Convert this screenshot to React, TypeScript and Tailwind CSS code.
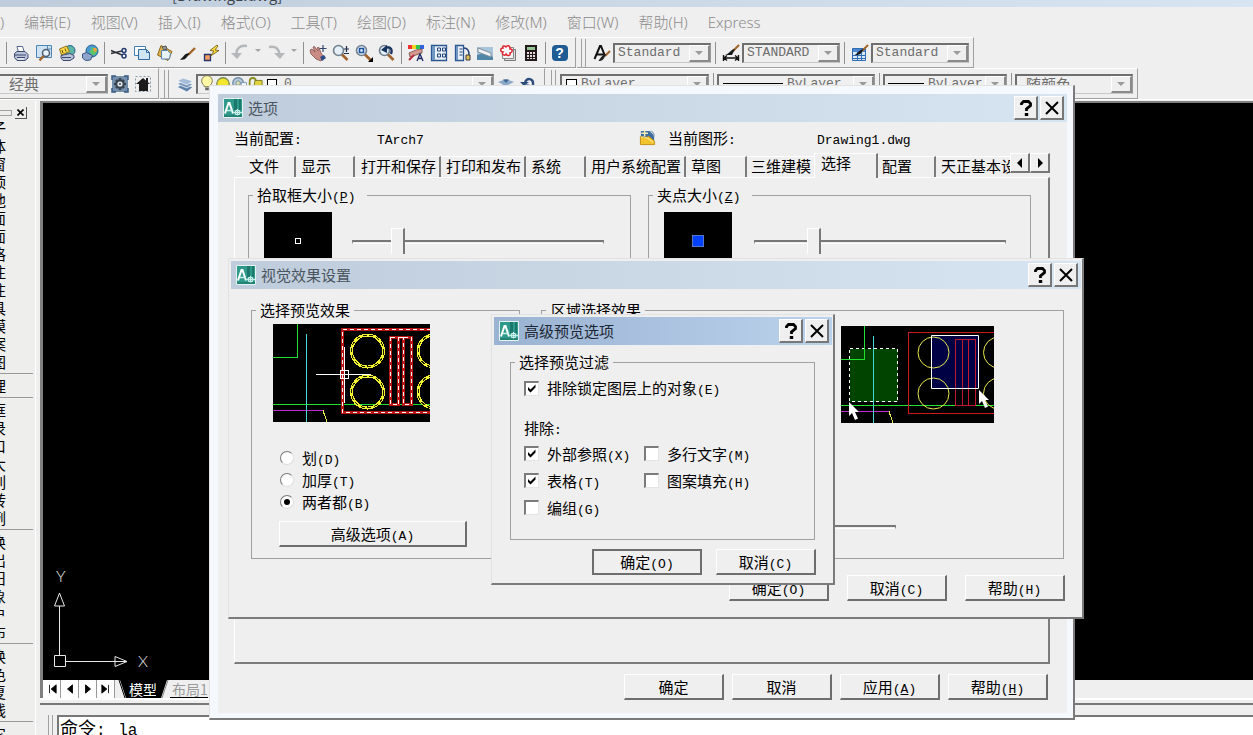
import React, { type ReactNode } from 'react';

/* ---------- text ---------- */

function Mixed({ text, hotkey }: { text: string; hotkey?: string }) {
  const parts = text.split(/([\x20-\x7e]+)/).filter(Boolean);
  return (
    <>
      {parts.map((part, i) =>
        /^[\x20-\x7e]/.test(part) ? (
          <span key={i} className="font-['Liberation_Mono',monospace] text-[13px] leading-none">
            {hotkey && part === `(${hotkey})` ? (
              <>
                (<u>{hotkey}</u>)
              </>
            ) : (
              part
            )}
          </span>
        ) : (
          <span key={i}>{part}</span>
        ),
      )}
    </>
  );
}

/* ---------- icons ---------- */

function Svg({ children, className = 'h-[18px] w-[18px]' }: { children: ReactNode; className?: string }) {
  return (
    <svg viewBox="0 0 18 18" className={className} fill="none" aria-hidden="true">
      {children}
    </svg>
  );
}

const Printer = () => (
  <Svg>
    <path d="M5 2.500h5.500l2 6H6.500z" fill="#fff" stroke="#54648c" />
    <path d="M2.500 9.500 5 7.500h8l3 3v3.500l-3 2.500H5l-2.500-3z" fill="#b8c2d8" stroke="#3e4a70" />
    <path d="M3 11h11M5 13.500h8" stroke="#3e4a70" />
    <path d="M6 15h6" stroke="#fff" />
  </Svg>
);
const Preview = () => (
  <Svg>
    <path d="M1.500 1.500h15v12h-15z" fill="#cfe2f3" stroke="#4f86b8" />
    <path d="M12.500 1.500v3.500h4" stroke="#4f86b8" />
    <circle cx="11" cy="9" r="3.500" fill="#e8f4fd" stroke="#4d5c6b" strokeWidth="1.500" />
    <path d="m8.500 12-4 4.500" stroke="#a5672c" strokeWidth="2.500" />
  </Svg>
);
const Plot = () => (
  <Svg>
    <circle cx="12" cy="6.500" r="5" fill="#5db5a5" stroke="#24608d" />
    <path d="m1.500 5 7-3 3 5.500-8 3.500z" fill="#ffd94a" stroke="#927011" />
    <path d="m4 6 1 3m2-4.500 1 3" stroke="#5a4a10" />
    <path d="m3 11.500 9-2 4 2v2.500l-4 2.500H5L3 14z" fill="#b8c2d8" stroke="#3e4a70" />
    <path d="M4 13.500h9" stroke="#3e4a70" />
  </Svg>
);
const Publish = () => (
  <Svg>
    <circle cx="11" cy="7" r="6" fill="#4a9bd2" stroke="#24608d" />
    <path d="M8 2.500c4 0 3 4 0 5l3 4c4 0 6-4 5-7z" fill="#5cc46b" />
    <path d="M12 4h3l1 3-3 1z" fill="#f0a23c" />
    <path d="m1.500 10 4-1.500 6 3-2 4.500-5 .5-3-2.500z" fill="#8fa6cc" stroke="#3f5585" />
  </Svg>
);
const Cut = () => (
  <Svg>
    <path d="M1 6.500 12 11M1 9.500l11-2.500" stroke="#30343c" strokeWidth="1.400" />
    <circle cx="14" cy="6.500" r="2" stroke="#253b70" strokeWidth="1.500" />
    <circle cx="14" cy="12" r="2" stroke="#253b70" strokeWidth="1.500" />
  </Svg>
);
const Copy = () => (
  <Svg>
    <path d="M1.500 2.500h11v9h-11z" fill="#fff" stroke="#3f80b5" />
    <path d="M5.500 5.500h8l3 3v7h-11z" fill="#cfe4f4" stroke="#2e6ca3" />
    <path d="M13.500 5.500v3h3" stroke="#2e6ca3" />
  </Svg>
);
const Paste = () => (
  <Svg>
    <path d="m5 1.500 11 6-4 9L1.500 11z" fill="#e0b24b" stroke="#8e671c" />
    <path d="m6 3 4-1 1 3-3 1z" fill="#999" stroke="#555" />
    <path d="M5.500 6.500h6l3 3-1 5.500h-8z" fill="#eaf3fb" stroke="#5482ad" />
  </Svg>
);
const Brush = () => (
  <Svg>
    <path d="M16 4 9 11" stroke="#a3662a" strokeWidth="2.400" />
    <path d="M10.500 9.500 8 13c-2 3-5 3-7 2.500 2-1 3-3 4.500-4.500 1.500-1 3-2 5-1.500z" fill="#16181c" />
  </Svg>
);
const Match = () => (
  <Svg>
    <path d="M2.500 10.500h6v6h-6z" fill="#f59b62" stroke="#25346c" strokeWidth="1.300" />
    <path d="m15 1-7 5.500 4 .500L8.500 12 17 6.500l-4-.500 3-4z" fill="#ffe43d" stroke="#6b4b0d" strokeWidth=".8" />
  </Svg>
);
const Undo = () => (
  <Svg>
    <path d="M16 2C9 .5 5 5 5.500 11" stroke="#b5b8bb" strokeWidth="2.500" />
    <path d="M0 9h11l-5 6z" fill="#b5b8bb" />
  </Svg>
);
const Redo = () => (
  <Svg>
    <path d="M2 3c7-1.500 10 2 10.500 8" stroke="#b5b8bb" strokeWidth="2.500" />
    <path d="M7 9h11l-5 6z" fill="#b5b8bb" />
  </Svg>
);
const Pan = () => (
  <Svg>
    <path d="m1 6 2-1 3 3-2-5 1.500-.5L9 7 8.500 3.500H10L12 9l3 4-3 4-5-2-5-5z" fill="#c98b86" stroke="#88504e" strokeWidth=".8" />
    <path d="m11 13 4-2 2 3-4 3z" fill="#2f4b86" />
    <path d="M14 1v7M10.500 4.500h7" stroke="#35466b" strokeWidth="1.200" />
  </Svg>
);
const ZoomLens = ({ children }: { children?: ReactNode }) => (
  <Svg>
    <path d="m9.500 10 6 6" stroke="#a3622b" strokeWidth="2.600" />
    <circle cx="6.500" cy="6.500" r="5" fill="#e4eff8" stroke="#71808f" strokeWidth="1.600" />
    {children}
  </Svg>
);
const Palette = () => (
  <Svg>
    <path d="M1 1h4v4H1z" fill="#e33" />
    <path d="M5 1h4v4H5z" fill="#f0d020" />
    <path d="M9 1h4v4H9z" fill="#2bc64a" />
    <path d="M13 1h4v4h-4z" fill="#3160e0" />
    <path d="m2 9 7-3 6-1v4l-6 2-6 2z" fill="#d49a90" stroke="#794643" strokeWidth=".8" />
    <path d="m2 16 5-5" stroke="#b52f3f" strokeWidth="2" />
    <path d="m10 17 3-7 3 7m-5-2.500h4" stroke="#1d2a66" strokeWidth="1.300" />
  </Svg>
);
const ToolPalette = () => (
  <Svg>
    <path d="M1.500 1.500h15v15h-15z" fill="#e9f0f8" stroke="#2d5790" strokeWidth="1.300" />
    <path d="M2 2h3v14H2z" fill="#6f97c4" />
    <path d="M7.500 4h3v3h-3zm5 0h3v3h-3zm-5 6h3v3h-3zm5 0h3v3h-3z" stroke="#23427a" />
  </Svg>
);
const SheetSet = () => (
  <Svg>
    <path d="M2.500 1.500h8v15h-8z" fill="#e9f0f8" stroke="#2d5790" strokeWidth="1.300" />
    <path d="M3 2h2v14H3z" fill="#6f97c4" />
    <path d="M6.500 5h3M6.500 8h3M6.500 11h3" stroke="#23427a" />
    <path d="M11 4c4 0 5 3 5 7" stroke="#23427a" strokeWidth="1.500" />
    <path d="M13 11h4v5h-4z" fill="#e3bf58" stroke="#3a3a3a" />
  </Svg>
);
const Render = () => (
  <Svg>
    <path d="M1 3h16v13H1z" fill="#a8c5dc" />
    <path d="M1 11 8 9l9 4v3H1z" fill="#4f86a8" />
    <path d="m2 4 13 5v4L2 8z" fill="#eef2f5" stroke="#7f8d99" />
  </Svg>
);
const Markup = () => (
  <Svg>
    <path d="M5.500 5.500h11v11h-11z" fill="#ddd" stroke="#777" />
    <path d="M3.500 3.500h11v11h-11z" fill="#f4f4f4" stroke="#888" />
    <path d="M4 4c-3 0-3 4 0 4-2 3 2 4 3 2 2 3 5 1 4-1 3-1 3-4 0-4 0-4-3-4-4-2-2-2-4-1-3 1z" fill="#fff" stroke="#df2630" strokeWidth="1.500" />
  </Svg>
);
const Calculator = () => (
  <Svg>
    <path d="M3 1h12v16H3z" fill="#221a1a" />
    <path d="M5 3h8v3H5z" fill="#92c592" />
    <path d="M5 8h2v2H5zm3 0h2v2H8zm3 0h2v2h-2zm-6 3h2v2H5zm3 0h2v2H8zm3 0h2v2h-2zm-6 3h2v1H5zm3 0h2v1H8zm3 0h2v1h-2z" fill="#e9dcdc" />
  </Svg>
);
const TextStyle = () => (
  <Svg>
    <path d="M1.500 15 7 2h1l4 10M4 10.500h7" stroke="#111" strokeWidth="2" />
    <path d="m17 7-5 5" stroke="#a3662a" strokeWidth="2" />
    <path d="m13.500 10-3 5c-2 2-3 2-5 2 2-3 4-7 8-7z" fill="#222" />
  </Svg>
);
const DimStyle = () => (
  <Svg>
    <path d="m17 1-6 6" stroke="#a3662a" strokeWidth="2.200" />
    <path d="m13 5-3 6H3c4-1 6-6 10-6z" fill="#16181c" />
    <path d="M1.500 11v6m15-6v6M2 14h14M5 11.500 2 14l3 2.500m8-5 3 2.500-3 2.500" stroke="#111" strokeWidth="1.400" />
  </Svg>
);
const TableStyle = () => (
  <Svg>
    <path d="M1.500 4.500h13v12h-13z" fill="#dbe9f7" stroke="#2f6cb4" />
    <path d="M2 5h12v3H2z" fill="#4e8bd0" />
    <path d="M2 11.500h12m-12 3h12M6.500 8v8m4-8v8" stroke="#2f6cb4" />
    <path d="m17 1-6 6" stroke="#a3662a" strokeWidth="2" />
    <path d="m12.500 5-3 5c-2 1-4 1-6 1 3-1 4-5 9-6z" fill="#16181c" />
  </Svg>
);
const Gear = () => (
  <Svg>
    <path d="M1 1h16v16H1z" fill="#7590ad" />
    <path d="M1 5V1h4m8 0h4v4m0 8v4h-4m-8 0H1v-4" stroke="#34597d" strokeWidth="1.500" />
    <path d="M9 3v12M3 9h12M5 5l8 8M13 5l-8 8" stroke="#3a444f" strokeWidth="2.600" />
    <circle cx="9" cy="9" r="4.500" fill="#3a444f" />
    <circle cx="9" cy="9" r="2.600" fill="#e6ecf2" />
    <circle cx="9" cy="9" r="1" fill="#3a444f" />
  </Svg>
);
const House = () => (
  <Svg>
    <path d="M1.500 1.500h15v15h-15z" stroke="#8a97a5" strokeDasharray="2 2" />
    <path d="m9 3 7 6h-2v7H5V9H2z" fill="#1b1b1b" />
    <path d="M12 3h2v4h-2z" fill="#1b1b1b" />
  </Svg>
);
const Layers = () => (
  <Svg>
    <path d="m1 12 6-3 10 3-6 5z" fill="#5c81ab" stroke="#fff" strokeWidth=".7" />
    <path d="m1 9 6-3 10 3-6 4z" fill="#7897bb" stroke="#fff" strokeWidth=".7" />
    <path d="m1 6 6-3 10 3-6 4z" fill="#a5bdd8" stroke="#fff" strokeWidth=".7" />
  </Svg>
);
const LayerStack = () => (
  <Svg>
    <path d="m1 12 6-3 10 3-6 5z" fill="#5c81ab" />
    <path d="m1 7 8-3 8 3-8 4z" fill="#8da9c8" />
    <path d="M6 4.500h6L9 8z" fill="#3f6592" />
  </Svg>
);
const LayerPrev = () => (
  <Svg>
    <path d="m1 12 6-3 10 3-6 3z" fill="#5c81ab" />
    <path d="M5 8c1-6 9-5 8 2" stroke="#2c4e7c" strokeWidth="2.500" />
    <path d="M0 7h9l-5 4z" fill="#2c4e7c" />
  </Svg>
);
const Bulb = () => (
  <Svg className="h-4 w-4">
    <path d="M6 12c0-2-3-3-3-6.500a6 6 0 0 1 12 0C15 9 12 10 12 12z" fill="#fff9a8" stroke="#777044" />
    <path d="M7 13h4v3H7z" fill="#666" />
  </Svg>
);
const Sun = () => (
  <Svg className="h-4 w-4">
    <circle cx="9" cy="9" r="7" fill="#f4e62c" stroke="#7c8c50" strokeWidth="1.500" />
  </Svg>
);
const Freeze = () => (
  <Svg className="h-4 w-4">
    <circle cx="8" cy="8" r="6" fill="#b8cada" stroke="#6f8ba5" strokeWidth="1.500" />
    <circle cx="8" cy="8" r="2.500" fill="#e3e3a2" stroke="#6f8ba5" />
    <path d="M11.500 7.500h6v8h-6z" fill="#fff" stroke="#6f8ba5" />
  </Svg>
);
const Lock = () => (
  <Svg className="h-4 w-4">
    <path d="M3 10V6c0-5 7-5 7 0v2" stroke="#8a8d20" strokeWidth="2" />
    <path d="M9 5h8v11H7z" fill="#dfd23c" stroke="#77761c" />
  </Svg>
);
const DwgIcon = () => (
  <Svg className="h-[17px] w-[17px]">
    <path d="M2 2h9l5 5v9H2z" fill="#3e6c9e" />
    <path d="M1.500 16.500V8l5 1 4-1 6 5v3.500z" fill="#f2c52f" stroke="#c58d14" />
    <path d="M2 9c3-2 8 1 13 5" stroke="#fff3b0" />
    <path d="M6 1v7M2.500 4.500h7" stroke="#f5eeb4" strokeWidth="1.500" />
    <path d="M12 2c3 1 4 3 4 6" stroke="#8fa9c0" strokeWidth="1.500" />
  </Svg>
);

function AppIcon() {
  return (
    <svg viewBox="0 0 20 20" className="h-5 w-5 shrink-0" fill="none" aria-hidden="true">
      <path d="M.5.5h19v19H.5z" fill="#2e9a8b" stroke="#e4f2f0" />
      <path d="M11 1h3v11h-3zm5 0h2v11h-2z" fill="#1c776c" />
      <path d="M2 15.500 5.500 5h1L10 15.500" stroke="#fff" strokeWidth="2" />
      <path d="M4 12.500h6M11 14.500h8M14.500 11v7" stroke="#c9efe9" strokeWidth="1.300" />
      <path d="M12.500 12.500h4v4h-4z" stroke="#c9efe9" />
      <path d="M1 18h18" stroke="#176c61" />
    </svg>
  );
}

/* ---------- toolbar parts ---------- */

function Tool({ label, children }: { label: string; children: ReactNode }) {
  return (
    <button type="button" aria-label={label} className="flex h-6 w-[23px] shrink-0 items-center justify-center">
      {children}
    </button>
  );
}
const Sep = () => (
  <span className="flex h-[22px] w-[6px] shrink-0 justify-center">
    <span className="w-px bg-[#909090]" />
  </span>
);
const WideSep = () => (
  <span className="flex h-[22px] w-2 shrink-0 justify-center">
    <span className="w-px bg-[#909090]" />
  </span>
);
const Caret = () => (
  <span className="flex w-[13px] shrink-0 justify-center pb-1">
    <svg viewBox="0 0 6 3" className="h-[3px] w-[6px]" aria-hidden="true">
      <path d="M0 0h6L3 3z" fill="#a4a4a4" />
    </svg>
  </span>
);
const Grip = () => (
  <span className="mr-1 ml-1 flex h-7 shrink-0 gap-[3px]">
    <span className="w-px bg-[#a0a0a0]" />
    <span className="w-px bg-[#a0a0a0]" />
  </span>
);
function Bar({ children }: { children: ReactNode }) {
  return (
    <div className="mr-px flex h-full shrink-0 items-center border-t border-r border-b border-t-white border-r-[#a0a0a0] border-b-[#a0a0a0] pr-1">
      {children}
    </div>
  );
}
function Combo({ label, value, width, lead }: { label: string; value: string; width: string; lead?: ReactNode }) {
  const font = /^[\x20-\x7e]/.test(value) ? "font-['Liberation_Mono',monospace] text-[13px]" : 'text-[15px]';
  return (
    <span
      className={`relative flex h-5 shrink-0 items-center overflow-hidden border-2 border-r border-b border-[#6f6f6f] border-r-[#9a9a9a] border-b-[#c8c8c8] text-[#6d6d6d] ${width}`}
    >
      {lead}
      <select
        aria-label={label}
        className={`h-full min-w-0 flex-1 appearance-none bg-transparent pl-[3px] leading-4 outline-none ${font}`}
      >
        <option>{value}</option>
      </select>
      <span className="pointer-events-none flex h-full w-[21px] shrink-0 items-center justify-center border-t border-r-2 border-b-2 border-l border-t-white border-r-[#8a8a8a] border-b-[#8a8a8a] border-l-white bg-[#efefef]">
        <svg viewBox="0 0 8 4" className="h-1 w-2" aria-hidden="true">
          <path d="M0 0h8L4 4z" fill="#9a9a9a" />
        </svg>
      </span>
    </span>
  );
}

/* ---------- dialog parts ---------- */

function PushButton({ text, hotkey, size = 'w-[100px]', primary }: { text: string; hotkey?: string; size?: string; primary?: boolean }) {
  return (
    <button
      type="button"
      className={`flex h-[26px] shrink-0 items-center justify-center whitespace-pre border-r-2 border-b-2 border-[#6e6e6e] bg-[#efefef] text-[15px] leading-5 ${
        primary ? 'border-t-2 border-l-2' : 'border-t border-l border-t-white border-l-white'
      } ${size}`}
    >
      <span>
        <Mixed text={text} hotkey={hotkey} />
      </span>
    </button>
  );
}

function Caption({ title, active }: { title: string; active?: boolean }) {
  return (
    <header
      className={`flex h-7 shrink-0 items-center pr-[3px] pl-[5px] ${
        active
          ? 'bg-linear-to-r from-[#9ab3d2] to-[#bbd2ec] text-[#1d2733]'
          : 'bg-linear-to-r from-[#bfccdb] to-[#d7e4f1] text-[#4b5560]'
      }`}
    >
      <AppIcon />
      <h2 className="flex-1 pl-[5px] text-[15px] leading-5">{title}</h2>
      <div className="flex gap-[2px]">
        <button
          type="button"
          aria-label="帮助"
          className="flex h-6 w-6 items-center justify-center border-t border-r-2 border-b-2 border-l border-t-white border-r-[#777] border-b-[#777] border-l-white bg-[#efefef] text-black"
        >
          <svg viewBox="0 0 14 16" className="h-4 w-[14px]" fill="none" aria-hidden="true">
            <path d="M2.500 5V3.500l2-2h5l2 2v2l-4 3.500v2" stroke="#000" strokeWidth="2.800" />
            <path d="M5.800 13h3.400v3H5.800z" fill="#000" />
          </svg>
        </button>
        <button
          type="button"
          aria-label="关闭"
          className="flex h-6 w-6 items-center justify-center border-t border-r-2 border-b-2 border-l border-t-white border-r-[#777] border-b-[#777] border-l-white bg-[#efefef]"
        >
          <svg viewBox="0 0 14 14" className="h-[14px] w-[14px]" fill="none" aria-hidden="true">
            <path d="m1 1 12 12M13 1 1 13" stroke="#000" strokeWidth="2" />
          </svg>
        </button>
      </div>
    </header>
  );
}

function Frame({ children, className }: { children: ReactNode; className: string }) {
  return (
    <section
      role="dialog"
      className={`absolute flex flex-col border-t border-r-2 border-b-2 border-l border-t-[#e2e2e2] border-r-[#7b7b7b] border-b-[#7b7b7b] border-l-[#e2e2e2] ${className}`}
    >
      {children}
    </section>
  );
}

function Group({ title, hotkey, children, className, legend = 'px-1' }: { title: string; hotkey?: string; children: ReactNode; className: string; legend?: string }) {
  return (
    <fieldset className={`border border-[#a0a0a0] ${className}`}>
      <legend className={`ml-1 h-5 text-[15px] leading-5 ${legend}`}>
        <Mixed text={title} hotkey={hotkey} />
      </legend>
      {children}
    </fieldset>
  );
}

function Slider({ label, value, width = 'w-[252px]' }: { label: string; value: number; width?: string }) {
  return (
    <input
      type="range"
      aria-label={label}
      defaultValue={value}
      className={`block h-7 appearance-none bg-transparent [&::-webkit-slider-runnable-track]:h-1 [&::-webkit-slider-runnable-track]:border [&::-webkit-slider-runnable-track]:border-t-2 [&::-webkit-slider-runnable-track]:border-[#8b8b8b] [&::-webkit-slider-runnable-track]:border-t-[#777] [&::-webkit-slider-runnable-track]:border-b-white [&::-webkit-slider-thumb]:-mt-[14px] [&::-webkit-slider-thumb]:h-[26px] [&::-webkit-slider-thumb]:w-[14px] [&::-webkit-slider-thumb]:appearance-none [&::-webkit-slider-thumb]:border-t [&::-webkit-slider-thumb]:border-r-2 [&::-webkit-slider-thumb]:border-l [&::-webkit-slider-thumb]:border-white [&::-webkit-slider-thumb]:border-r-[#777] [&::-webkit-slider-thumb]:bg-[#efefef] ${width}`}
    />
  );
}

function Check({ text, checked }: { text: string; checked?: boolean }) {
  return (
    <label className="flex items-center gap-2 text-[15px] leading-5 whitespace-nowrap">
      <span className="relative h-[15px] w-[15px] shrink-0">
        <input
          type="checkbox"
          defaultChecked={checked}
          className="peer block h-[15px] w-[15px] appearance-none border-t-2 border-r border-b border-l-2 border-t-[#7b7b7b] border-r-[#e4e4e4] border-b-[#e4e4e4] border-l-[#7b7b7b] bg-white"
        />
        <svg viewBox="0 0 15 15" className="pointer-events-none absolute inset-0 hidden h-[15px] w-[15px] peer-checked:block" fill="none" aria-hidden="true">
          <path d="M4 6v3l2.500 2.500 5-5v-3l-5 5z" fill="#000" />
        </svg>
      </span>
      <span>
        <Mixed text={text} />
      </span>
    </label>
  );
}

function Radio({ text, checked }: { text: string; checked?: boolean }) {
  return (
    <label className="flex h-[22px] items-center gap-2 text-[15px] leading-5">
      <span className="relative h-[14px] w-[14px]">
        <input
          type="radio"
          name="preview-effect"
          defaultChecked={checked}
          className="peer block h-[14px] w-[14px] appearance-none rounded-full border border-t-[#7b7b7b] border-r-[#dedede] border-b-[#dedede] border-l-[#7b7b7b] bg-white"
        />
        <span className="pointer-events-none absolute top-1 left-1 hidden h-[6px] w-[6px] rounded-full bg-black peer-checked:block" />
      </span>
      <span>
        <Mixed text={text} />
      </span>
    </label>
  );
}

/* ---------- drawings ---------- */

function SelectionPreview() {
  const rings = [
    [94.5, 27],
    [94.5, 68],
    [161, 27],
    [161, 68],
  ];
  const frame = 'M158 5.500H69.500V88.500H158';
  const bars = 'M117.500 13.500h8v67h-8zM130.500 13.500h7.500v67h-7.500zM125.500 13.500h5';
  return (
    <svg viewBox="0 0 157 98" className="h-[98px] w-[157px] bg-black" fill="none" shapeRendering="crispEdges" aria-hidden="true">
      <path d="M0 33.500h24.500V0" stroke="#20e030" />
      <path d="M0 80.500h157" stroke="#20e030" />
      <path d="M0 86.500h50" stroke="#c02ad0" />
      <path d="m50 86.500 4 11.500" stroke="#e8e850" />
      <path d="M33.500 10v88" stroke="#45d6d6" />
      <path d={frame} stroke="#b81414" strokeWidth="3" />
      <path d={frame} stroke="#fff" strokeDasharray="4 3" />
      <path d={bars} stroke="#b81414" strokeWidth="3" />
      <path d={bars} stroke="#fff" strokeDasharray="4 3" />
      {rings.map(([cx, cy]) => (
        <g key={`${cx}-${cy}`}>
          <circle cx={cx} cy={cy} r="16" stroke="#f2f232" strokeWidth="3" />
          <circle cx={cx} cy={cy} r="16" stroke="#1a1a05" strokeDasharray="4 3" />
        </g>
      ))}
      <path d="M43 50.500h55M71.500 23v56M67.500 46.500h8v8h-8z" stroke="#fff" />
    </svg>
  );
}

function AreaPreview() {
  const arrow = 'v14l3-3 3 7 3-1.500-3-6.500h4z';
  return (
    <svg viewBox="0 0 153 97" className="h-[97px] w-[153px] bg-black" fill="none" aria-hidden="true">
      <g shapeRendering="crispEdges">
        <path d="M8.500 22.500h48v53h-48z" fill="#004400" stroke="#fff" strokeDasharray="3 3" />
        <path d="M90.500 9.500h47v53h-47z" fill="#000044" />
        <path d="M0 33.500h23.500V0M0 79.500h153" stroke="#20e030" />
        <path d="M0 85.500h48" stroke="#c02ad0" />
        <path d="m48 85.500 4 11.500" stroke="#e8e850" />
        <path d="M32.500 10v87" stroke="#45d6d6" />
        <path d="M153 6.500H67.500v81H153" stroke="#d01818" />
        <path d="M114.500 13.500v66h20v-66zM121.500 13.500v66M127.500 13.500v66" stroke="#c01830" />
      </g>
      <circle cx="92.500" cy="26.500" r="15.500" stroke="#e8e850" />
      <circle cx="92.500" cy="67.500" r="15.500" stroke="#e8e850" />
      <circle cx="158" cy="26.500" r="15.500" stroke="#e8e850" />
      <circle cx="158" cy="67.500" r="15.500" stroke="#e8e850" />
      <path d="M90.500 9.500h47v53h-47z" stroke="#fff" />
      <path d={`M8 76${arrow}`} fill="#fff" />
      <path d={`M138 64${arrow}`} fill="#fff" />
    </svg>
  );
}

function UcsIcon() {
  return (
    <svg viewBox="0 0 110 110" className="h-[110px] w-[110px] font-['Lato',sans-serif] font-light" fill="none" stroke="#e8e8e8" aria-hidden="true">
      <path d="M11.500 85.500h11v11h-11zM16.500 85V36M23 91.500h50" />
      <path d="m16.500 23 5 13h-10zM84 91.500l-12-5v10zM84 91.500H72" />
      <text x="13" y="12" fontSize="16" fill="#e8e8e8" stroke="none">Y</text>
      <text x="95" y="97" fontSize="16" fill="#e8e8e8" stroke="none">X</text>
    </svg>
  );
}

/* ---------- main window ---------- */

const menus = ['编辑(E)', '视图(V)', '插入(I)', '格式(O)', '工具(T)', '绘图(D)', '标注(N)', '修改(M)', '窗口(W)', '帮助(H)', 'Express'];
const palette = ['子体窗顶他面面格注注具模案图', '理', '框录口大列转例', '换出旧象户布', '换色复线', '它'];

function StandardToolbars() {
  return (
    <div className="flex h-[31px] shrink-0">
      <Bar>
        <span className="w-[3px]" />
        <Sep />
        <Tool label="打印"><Printer /></Tool>
        <Tool label="打印预览"><Preview /></Tool>
        <Tool label="发布"><Plot /></Tool>
        <Tool label="网上发布"><Publish /></Tool>
        <Sep />
        <Tool label="剪切"><Cut /></Tool>
        <Tool label="复制"><Copy /></Tool>
        <Tool label="粘贴"><Paste /></Tool>
        <Tool label="特性匹配"><Brush /></Tool>
        <Tool label="块编辑器"><Match /></Tool>
        <Sep />
        <Tool label="放弃"><Undo /></Tool>
        <Caret />
        <Tool label="重做"><Redo /></Tool>
        <Caret />
        <Sep />
        <Tool label="平移"><Pan /></Tool>
        <Tool label="缩放">
          <ZoomLens><path d="M14.500 2v6M12 5h5M12 9.500h5" stroke="#1d2a4a" strokeWidth="1.200" /></ZoomLens>
        </Tool>
        <Tool label="窗口缩放">
          <ZoomLens>
            <path d="M4.500 4.500h4v4h-4z" stroke="#1f55a0" strokeWidth="1.600" />
            <path d="M18 13v5h-5z" fill="#000" />
          </ZoomLens>
        </Tool>
        <Tool label="上一个缩放">
          <ZoomLens>
            <path d="M13 10c2-5-1-8-5-6" stroke="#17325c" strokeWidth="2.200" />
            <path d="m3 6 6-5v8z" fill="#17325c" />
          </ZoomLens>
        </Tool>
        <Sep />
        <Tool label="特性"><Palette /></Tool>
        <Tool label="设计中心"><ToolPalette /></Tool>
        <Tool label="图纸集"><SheetSet /></Tool>
        <Tool label="渲染"><Render /></Tool>
        <Tool label="标记集"><Markup /></Tool>
        <Tool label="计算器"><Calculator /></Tool>
        <Sep />
        <Tool label="帮助">
          <span className="flex h-4 w-4 items-center justify-center rounded-sm bg-[#1f5c94] font-['Liberation_Sans',sans-serif] text-sm font-bold text-white">?</span>
        </Tool>
      </Bar>
      <Bar>
        <Grip />
        <Tool label="文字样式"><TextStyle /></Tool>
        <Combo label="文字样式" value="Standard" width="w-[98px]" />
        <WideSep />
        <Tool label="标注样式"><DimStyle /></Tool>
        <Combo label="标注样式" value="STANDARD" width="w-[98px]" />
        <WideSep />
        <Tool label="表格样式"><TableStyle /></Tool>
        <Combo label="表格样式" value="Standard" width="w-[98px]" />
      </Bar>
    </div>
  );
}

function PropertyToolbars() {
  return (
    <div className="flex h-[31px] shrink-0">
      <Bar>
        <Combo label="工作空间" value="经典" width="w-[108px] border-l-0 pl-[6px]" />
        <Tool label="工作空间设置"><Gear /></Tool>
        <Tool label="我的工作空间"><House /></Tool>
      </Bar>
      <Bar>
        <Grip />
        <Tool label="图层特性"><Layers /></Tool>
        <Combo
          label="图层"
          value="0"
          width="w-[298px]"
          lead={
            <span className="flex shrink-0 items-center pl-px">
              <Bulb />
              <Sun />
              <Freeze />
              <Lock />
              <span className="mx-1 h-[10px] w-[10px] border border-black bg-white" />
            </span>
          }
        />
        <Tool label="当前图层"><LayerStack /></Tool>
        <Tool label="上一个图层"><LayerPrev /></Tool>
      </Bar>
      <Bar>
        <span className="w-px" />
        <Grip />
        <Combo label="颜色" value="ByLayer" width="w-[149px]" lead={<span className="mr-px ml-1 h-[11px] w-[11px] shrink-0 border border-black bg-white" />} />
        <WideSep />
        <Combo label="线型" value="ByLayer" width="w-[158px]" lead={<span className="mr-px mb-[2px] ml-1 h-px w-[60px] shrink-0 bg-black" />} />
        <WideSep />
        <Combo label="线宽" value="ByLayer" width="w-[124px]" lead={<span className="mr-px mb-[2px] ml-[3px] h-px w-9 shrink-0 bg-black" />} />
        <WideSep />
        <Combo label="打印样式" value="随颜色" width="w-[118px] pl-[6px]" />
      </Bar>
    </div>
  );
}

function SidePalette() {
  return (
    <aside className="flex w-9 shrink-0 flex-col overflow-hidden border-r border-white bg-[#eeeeed] pt-[6px]">
      <div className="flex h-3 shrink-0 items-center gap-[3px]">
        <span className="h-[6px] w-3 border-y border-r border-[#a0a0a0]" />
        <button type="button" aria-label="关闭工具栏" className="flex h-3 w-3 items-center justify-center border-r border-b border-[#555]">
          <svg viewBox="0 0 7 7" className="h-[7px] w-[7px]" aria-hidden="true">
            <path d="m.5.5 6 6m0-6-6 6" stroke="#000" strokeWidth="1.600" />
          </svg>
        </button>
      </div>
      {palette.map((group, g) => (
        <ul key={g} className={`mr-[2px] shrink-0 pb-[2px] ${g > 0 ? 'border-t border-[#999] pt-[3px]' : ''}`}>
          {[...group].map((ch, i) => (
            <li key={i} className="flex h-[18px] w-[6px] justify-end overflow-hidden text-[15px] leading-[18px]">
              {ch}
            </li>
          ))}
        </ul>
      ))}
    </aside>
  );
}

function LayoutTabs() {
  const arrows = ['M3 1v10M11 1 5 6l6 5z', 'M9 1 3 6l6 5z', 'M3 1l6 5-6 5z', 'M9 1v10M1 1l6 5-6 5z'];
  return (
    <div className="flex h-[18px] shrink-0 overflow-hidden bg-[#efefef] text-sm leading-[18px]">
      {arrows.map((d) => (
        <button key={d} type="button" aria-label="滚动布局" className="flex w-[18px] items-center justify-center border-r border-[#999] bg-white">
          <svg viewBox="0 0 12 12" className="h-[10px] w-[10px]" aria-hidden="true">
            <path d={d} fill="#000" stroke="#000" />
          </svg>
        </button>
      ))}
      <svg viewBox="0 0 12 18" className="ml-[3px] h-[18px] w-3" aria-hidden="true">
        <path d="M2 0h10v18H8z" fill="#000" />
        <path d="m1 0 6 18" stroke="#000" />
      </svg>
      <button type="button" className="-mr-px -ml-px bg-black text-white">模型</button>
      <svg viewBox="0 0 14 18" className="h-[18px] w-[14px]" aria-hidden="true">
        <path d="M0 0h11L5 18H0z" fill="#000" />
        <path d="M6 18 12 0" stroke="#888" />
      </svg>
      <button type="button" className="border-b border-black pl-[2px] text-[#9a9a9a]">布局1</button>
    </div>
  );
}

/* ---------- dialogs ---------- */

const tabs = [
  { name: '文件', width: 'w-[60px] pl-[13px]' },
  { name: '显示', width: 'w-[59px] pl-[5px]' },
  { name: '打开和保存', width: 'w-[86px] pl-[6px]' },
  { name: '打印和发布', width: 'w-[85px] pl-[5px]' },
  { name: '系统', width: 'w-[60px] pl-[5px]' },
  { name: '用户系统配置', width: 'w-[100px] pl-[5px]' },
  { name: '草图', width: 'w-[61px] pl-[5px]' },
  { name: '三维建模', width: 'w-[67px] pl-1' },
  { name: '选择', width: 'w-[64px] pl-[6px]' },
  { name: '配置', width: 'w-[58px] pl-1' },
  { name: '天正基本设置', width: 'w-[100px] pl-[5px]' },
];

function OptionsDialog() {
  return (
    <Frame className="top-[85px] left-[209px] h-[635px] w-[866px] bg-[#f5f8fc] pt-2 pr-[6px] pb-[5px] pl-2">
      <Caption title="选项" />
      <div className="flex min-h-0 flex-1 flex-col bg-[#efefef] pr-[17px] pb-[13px] pl-4">
        <div className="flex h-[31px] shrink-0 items-center text-[15px] leading-5">
          <span className="w-[143px]"><Mixed text="当前配置:" /></span>
          <span className="w-[262px]"><Mixed text="TArch7" /></span>
          <DwgIcon />
          <span className="box-content w-[149px] pl-3"><Mixed text="当前图形:" /></span>
          <span><Mixed text="Drawing1.dwg" /></span>
        </div>
        <div className="relative -mb-px flex h-[25px] shrink-0">
          <div role="tablist" className="flex min-w-0 flex-1 items-end overflow-hidden pl-[2px]">
            {tabs.map((tab) => {
              const selected = tab.name === '选择';
              return (
                <button
                  key={tab.name}
                  type="button"
                  role="tab"
                  aria-selected={selected}
                  className={`shrink-0 border-t border-t-white text-left text-[15px] leading-[18px] whitespace-nowrap ${
                    selected ? 'h-[25px] border-l border-l-white bg-[#efefef] pb-[6px]' : 'mb-px h-[21px] pb-1'
                  } ${tab.name === '三维建模' ? '' : 'border-r-2 border-r-[#7b7b7b]'} ${tab.width}`}
                >
                  {tab.name}
                </button>
              );
            })}
          </div>
          {['M7 0v10L2 5z', 'M3 0v10l5-5z'].map((d) => (
            <button
              key={d}
              type="button"
              aria-label="滚动选项卡"
              className="flex h-5 w-5 items-center justify-center border-t border-r-2 border-b-2 border-l border-t-white border-r-[#777] border-b-[#777] border-l-white"
            >
              <svg viewBox="0 0 10 10" className="h-[10px] w-[10px]" aria-hidden="true">
                <path d={d} fill="#000" />
              </svg>
            </button>
          ))}
        </div>
        <div className="flex min-h-0 flex-1 gap-[17px] border-t border-r-2 border-b-2 border-l border-t-white border-r-[#7b7b7b] border-b-[#7b7b7b] border-l-white pt-[7px] pr-[17px] pl-[13px]">
          <Group title="拾取框大小(P)" hotkey="P" className="h-[200px] flex-1" legend="pr-3 pl-1">
            <div className="flex items-start gap-5 pt-[7px] pl-[15px]">
              <div className="flex h-[58px] w-[68px] items-center justify-center bg-black">
                <span className="h-[6px] w-[6px] border border-white" />
              </div>
              <div className="pt-4"><Slider label="拾取框大小" value={16} /></div>
            </div>
          </Group>
          <Group title="夹点大小(Z)" hotkey="Z" className="h-[200px] flex-1" legend="pr-3 pl-1">
            <div className="flex items-start gap-[22px] pt-[7px] pl-[15px]">
              <div className="flex h-[58px] w-[68px] items-center justify-center bg-black">
                <span className="h-3 w-3 border border-[#5a78c8] bg-[#0040ff]" />
              </div>
              <div className="pt-4"><Slider label="夹点大小" value={22} /></div>
            </div>
          </Group>
        </div>
        <div className="flex shrink-0 justify-end gap-2 pt-[10px] pr-[2px]">
          <PushButton text="确定" />
          <PushButton text="取消" />
          <PushButton text="应用(A)" hotkey="A" />
          <PushButton text="帮助(H)" hotkey="H" />
        </div>
      </div>
    </Frame>
  );
}

function VisualEffectDialog() {
  return (
    <Frame className="top-[258px] left-[228px] w-[856px] bg-[#efefef]">
      <div className="p-[2px] pr-px">
        <Caption title="视觉效果设置" />
        <div className="pt-[11px] pr-4 pb-[14px] pl-5">
          <div className="flex gap-[21px] pr-px">
            <Group title="选择预览效果" className="h-[259px] w-[269px] shrink-0">
              <div className="flex flex-col items-start pt-1 pl-[21px]">
                <SelectionPreview />
                <div className="mt-[25px] pl-[7px]">
                  <Radio text="划(D)" />
                  <Radio text="加厚(T)" />
                  <Radio text="两者都(B)" checked />
                </div>
                <div className="mt-2 pl-[6px]"><PushButton text="高级选项(A)" size="w-[188px]" /></div>
              </div>
            </Group>
            <Group title="区域选择效果" className="h-[259px] flex-1" legend="pr-1 pl-[5px]">
              <div className="flex flex-col gap-[90px] pt-[6px]">
                <div className="flex pl-[299px]"><AreaPreview /></div>
                <div className="flex pl-[104px]"><Slider label="选择区域不透明度" value={25} width="w-[250px]" /></div>
              </div>
            </Group>
          </div>
          <div className="flex justify-end gap-[18px] pt-4">
            <PushButton text="确定(O)" />
            <PushButton text="取消(C)" />
            <PushButton text="帮助(H)" />
          </div>
        </div>
      </div>
    </Frame>
  );
}

function AdvancedPreviewDialog() {
  return (
    <Frame className="top-[314px] left-[491px] w-[344px] bg-[#efefef]">
      <div className="p-[2px] pr-px pb-0">
        <Caption title="高级预览选项" active />
        <div className="px-4 pt-[7px] pb-2">
          <Group title="选择预览过滤" className="mr-px h-[188px]">
            <div className="pt-[6px] pl-[13px]">
              <Check text="排除锁定图层上的对象(E)" checked />
              <p className="pt-5 text-[15px] leading-5"><Mixed text="排除:" /></p>
              <div className="grid auto-rows-[27px] grid-cols-[120px_1fr] items-center pt-[2px]">
                <Check text="外部参照(X)" checked />
                <Check text="多行文字(M)" />
                <Check text="表格(T)" checked />
                <Check text="图案填充(H)" />
                <Check text="编组(G)" />
              </div>
            </div>
          </Group>
          <div className="flex justify-end gap-[14px] pt-[9px]">
            <PushButton text="确定(O)" size="w-[110px]" primary />
            <PushButton text="取消(C)" />
          </div>
        </div>
      </div>
    </Frame>
  );
}

export default function App() {
  return (
    <div className="relative flex h-screen flex-col overflow-hidden bg-[#efefef] font-['Noto_Sans_CJK_SC',sans-serif] text-black">
      <div className="flex h-[7px] shrink-0 items-end overflow-hidden bg-linear-to-r from-[#bfccdb] to-[#d7e4f1] pl-[172px] text-[15px] leading-6 text-[#3c4650]">
        <span>[Drawing1.dwg]</span>
      </div>
      <nav className="flex h-[30px] shrink-0 items-center gap-5 overflow-hidden font-['Noto_Sans','Noto_Sans_CJK_SC',sans-serif] text-[15px] font-light text-[#8c8c8c]">
        <span className="w-1 shrink-0">)</span>
        {menus.map((m) => (
          <button key={m} type="button" className="shrink-0">{m}</button>
        ))}
      </nav>
      <StandardToolbars />
      <PropertyToolbars />
      <div className="flex min-h-0 flex-1 border-t border-white pt-px">
        <SidePalette />
        <div className="ml-1 flex min-w-0 flex-1 flex-col">
          <div className="flex min-h-0 flex-1 flex-col border-t-2 border-l-[3px] border-[#808080]">
            <main className="flex min-h-0 flex-1 items-end bg-black">
              <UcsIcon />
            </main>
            <LayoutTabs />
          </div>
          <div className="h-[7px] shrink-0 border-t-2 border-b-2 border-t-white border-b-[#777]" />
          <div className="flex h-[30px] shrink-0 pt-[10px] pl-2">
            <span className="flex gap-[3px] pr-1">
              <span className="w-px bg-[#a0a0a0]" />
              <span className="w-px bg-[#a0a0a0]" />
            </span>
            <label className="flex min-w-0 flex-1 items-baseline overflow-hidden border-t-2 border-l-2 border-[#777] bg-white text-lg leading-5">
              <span className="shrink-0 pl-px whitespace-pre">命令<span className="font-['Liberation_Mono',monospace] text-base leading-none">: </span></span>
              <input defaultValue="la" className="min-w-0 flex-1 pl-[3px] font-['Liberation_Mono',monospace] text-base leading-5 outline-none" />
            </label>
          </div>
        </div>
      </div>
      <OptionsDialog />
      <VisualEffectDialog />
      <AdvancedPreviewDialog />
    </div>
  );
}
